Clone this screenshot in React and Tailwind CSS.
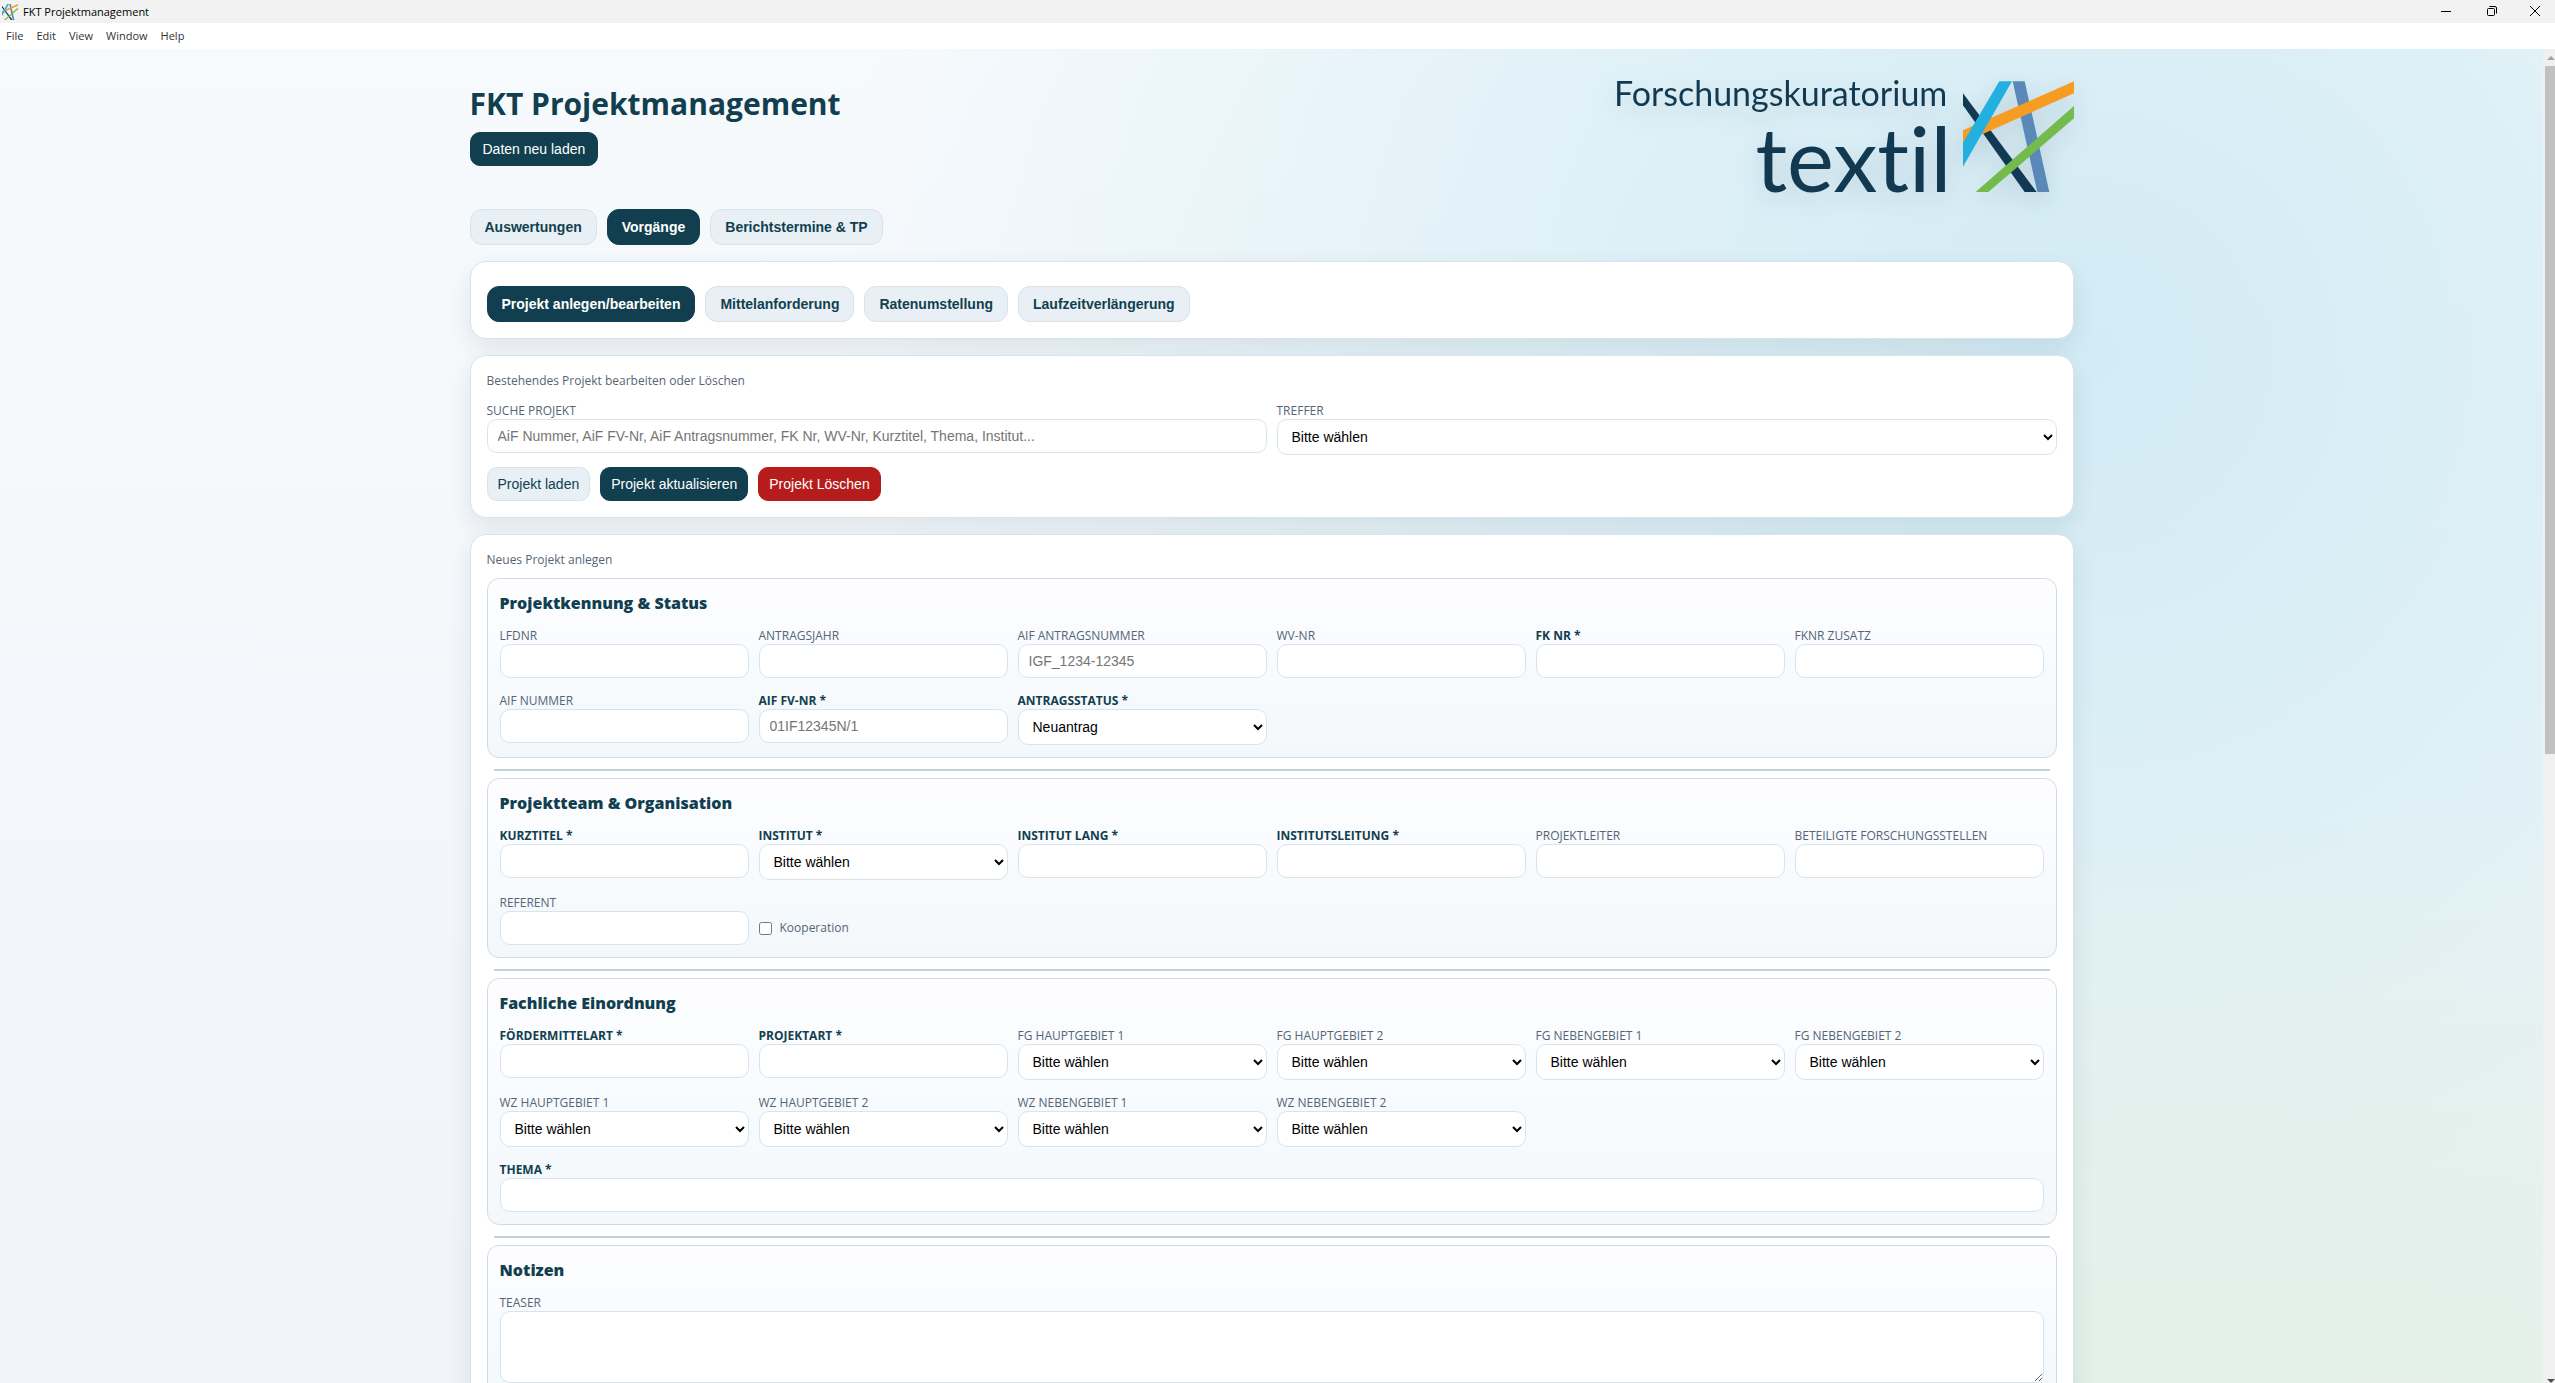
import { useId } from "react";

const NAVY_BTN = "border-[#113f4f] bg-[#113f4f] text-white";
const LIGHT_BTN = "border-[#d8e3ea] bg-[#e8eff5] text-[#113f4f]";
const CONTROL =
  "w-full rounded-[10px] border border-[#d8e4eb] bg-white text-sm leading-4 font-[Liberation_Sans,Arial,sans-serif]";

function Tab({ children, active }) {
  return (
    <button
      type="button"
      className={`h-9 rounded-xl border px-3.5 font-[Liberation_Sans,Arial,sans-serif] text-sm leading-4 font-bold ${active ? NAVY_BTN : LIGHT_BTN}`}
    >
      {children}
    </button>
  );
}

function Action({ children, tone }) {
  return (
    <button
      type="button"
      className={`h-[34px] rounded-[10px] border px-2.5 font-[Liberation_Sans,Arial,sans-serif] text-sm leading-4 ${tone}`}
    >
      {children}
    </button>
  );
}

function Card({ children, className = "" }) {
  return (
    <section
      className={`rounded-2xl border border-[#d8e4eb] bg-white p-4 shadow-[0_10px_24px_rgba(17,40,60,0.09)] ${className}`}
    >
      {children}
    </section>
  );
}

function Field({ label, required, placeholder, select, area, className = "" }) {
  const id = useId();
  return (
    <div className={`flex flex-col ${className}`}>
      <label
        htmlFor={id}
        className={`pt-1 text-xs leading-[17px] uppercase ${required ? "font-bold text-[#113f4f]" : "text-[#566575]"}`}
      >
        {label}
        {required ? " *" : ""}
      </label>
      {select ? (
        <select id={id} className={`${CONTROL} h-9 px-2.5 text-black`}>
          <option>{select}</option>
        </select>
      ) : area ? (
        <textarea id={id} className={`${CONTROL} h-[72px] px-2.5 py-2`} />
      ) : (
        <input
          id={id}
          type="text"
          placeholder={placeholder}
          className={`${CONTROL} h-[34px] px-2.5 placeholder:text-[#757575]`}
        />
      )}
    </div>
  );
}

function Group({ title, children }) {
  return (
    <fieldset className="block">
      <div className="rounded-xl border border-[#cddde6] bg-linear-to-b from-[#fdfdff] via-[#f8fbfe] to-[#f4f8fb] p-3">
        <h2 className="mb-2 text-base leading-6 font-extrabold text-[#113f4f]">{title}</h2>
        <div className="grid grid-cols-6 items-start gap-2.5">{children}</div>
      </div>
    </fieldset>
  );
}

function Divider() {
  return <hr className="mx-[7px] mt-[11px] mb-[7px] h-0.5 border-0 bg-[#c0d2de]" />;
}

function Threads() {
  return (
    <>
      <polygon fill="#5a88b8" points="1268,66 1304,66 1378,398 1342,398" />
      <polygon fill="#113a52" points="1119,102 1119,138 1304,398 1340,398" />
      <polygon fill="#f79c22" points="1119,213 1452,66 1452,102 1119,250" />
      <polygon fill="#22b0e0" points="1228,66 1266,66 1119,322 1119,250" />
      <polygon fill="#74ba4c" points="1157,398 1195,398 1452,177 1452,140" />
    </>
  );
}

function Logo() {
  return (
    <svg
      viewBox="66 65 1386 336"
      className="h-28 w-[462px] overflow-visible drop-shadow-[0_8px_12px_rgba(17,50,75,0.15)]"
      role="img"
      aria-label="Forschungskuratorium textil"
    >
      <g fill="#113a52" textAnchor="end" fontFamily="Lato, sans-serif" className="[font-variant-ligatures:none]">
        <text x="1072" y="139" fontSize="102">Forschungskuratorium</text>
        <text x="1084" y="397" fontSize="266">textil</text>
      </g>
      <Threads />
    </svg>
  );
}

function Chrome() {
  return (
    <header className="shrink-0 font-[Open_Sans,sans-serif] text-black">
      <div className="flex h-[23px] items-center bg-[#f2f2f2]">
        <svg viewBox="1119 65 333 334" className="ml-0.5 size-4" aria-hidden="true">
          <Threads />
        </svg>
        <span className="ml-[5px] text-[11px] leading-4">FKT Projektmanagement</span>
        <div className="ml-auto flex items-center">
          <button type="button" aria-label="Minimieren" className="flex w-[46px] justify-center">
            <svg viewBox="0 0 12 12" className="size-3"><path d="M1 5.500h10" stroke="#000" /></svg>
          </button>
          <button type="button" aria-label="Verkleinern" className="flex w-[46px] justify-center">
            <svg viewBox="0 0 12 12" className="size-3" fill="none" stroke="#000">
              <rect x="1.5" y="2.500" width="7" height="7" rx="1" />
              <path d="M3.5 .5h5.5a1.5 1.5 0 0 1 1.5 1.5v5.500" />
            </svg>
          </button>
          <button type="button" aria-label="Schließen" className="flex w-10 justify-center">
            <svg viewBox="0 0 12 12" className="size-3"><path d="M1 0l10 10M11 0L1 10" stroke="#000" /></svg>
          </button>
        </div>
      </div>
      <nav className="flex h-[26px] items-center gap-[13px] bg-white pl-1.5 text-[11px] leading-4 text-[#333]">
        {["File", "Edit", "View", "Window", "Help"].map((item) => (
          <button key={item} type="button">{item}</button>
        ))}
      </nav>
    </header>
  );
}

function ScrollTrack() {
  return (
    <div className="flex w-3 shrink-0 flex-col items-center bg-[#f0f0f0]" aria-hidden="true">
      <svg viewBox="0 0 12 17" className="h-[17px] w-3"><path d="M8 7l4 4H4z" fill="#a3a3a3" /></svg>
      <div className="ml-0.5 h-[51.6%] w-2.5 bg-[#c1c1c1]" />
      <svg viewBox="0 0 12 5" className="mt-auto h-[5px] w-3"><path d="M4 1h8L8 5z" fill="#505050" /></svg>
    </div>
  );
}

const PLEASE = "Bitte wählen";

export default function App() {
  return (
    <div className="flex h-screen flex-col overflow-hidden font-[Open_Sans,sans-serif]">
      <Chrome />
      <div className="flex min-h-0 flex-1">
        <div className="min-w-0 flex-1 overflow-hidden bg-[radial-gradient(ellipse_64%_50%_at_88%_105%,rgba(226,240,230,0.85),rgba(226,240,230,0.6)_50%,transparent),radial-gradient(circle_at_82%_23%,#d2ebf5_0%,rgba(214,237,245,0.72)_22%,rgba(220,238,246,0)_54%),linear-gradient(180deg,#f7fafd,#f0f4f8)]">
          <main className="mx-auto max-w-[1640px] px-[18px] pt-8">
            <div className="mb-4 flex items-start justify-between">
              <div>
                <h1 className="mb-[5px] text-[30px] leading-[46px] font-bold text-[#113f4f]">FKT Projektmanagement</h1>
                <button
                  type="button"
                  className={`block h-[34px] rounded-[10px] border px-3 font-[Liberation_Sans,Arial,sans-serif] text-sm leading-4 ${NAVY_BTN}`}
                >
                  Daten neu laden
                </button>
              </div>
              <Logo />
            </div>

            <nav className="mb-4 flex gap-2.5">
              <Tab>Auswertungen</Tab>
              <Tab active>Vorgänge</Tab>
              <Tab>Berichtstermine &amp; TP</Tab>
            </nav>

            <Card className="mb-4 pt-6">
              <nav className="flex gap-2.5">
                <Tab active>Projekt anlegen/bearbeiten</Tab>
                <Tab>Mittelanforderung</Tab>
                <Tab>Ratenumstellung</Tab>
                <Tab>Laufzeitverlängerung</Tab>
              </nav>
            </Card>

            <Card className="mb-4">
              <p className="mb-[9px] text-xs leading-[17px] text-[#566575]">Bestehendes Projekt bearbeiten oder Löschen</p>
              <div className="grid grid-cols-2 items-start gap-2.5">
                <Field
                  label="Suche Projekt"
                  placeholder="AiF Nummer, AiF FV-Nr, AiF Antragsnummer, FK Nr, WV-Nr, Kurztitel, Thema, Institut..."
                />
                <Field label="Treffer" select={PLEASE} />
              </div>
              <div className="mt-3 flex gap-2.5">
                <Action tone={LIGHT_BTN}>Projekt laden</Action>
                <Action tone={NAVY_BTN}>Projekt aktualisieren</Action>
                <Action tone="border-[#b71c1c] bg-[#b71c1c] text-white">Projekt Löschen</Action>
              </div>
            </Card>

            <Card>
              <p className="mb-2.5 text-xs leading-[17px] text-[#566575]">Neues Projekt anlegen</p>

              <Group title="Projektkennung &amp; Status">
                <Field label="LfdNr" />
                <Field label="Antragsjahr" />
                <Field label="AiF Antragsnummer" placeholder="IGF_1234-12345" />
                <Field label="WV-Nr" />
                <Field label="FK Nr" required />
                <Field label="FKNr Zusatz" />
                <Field label="AiF Nummer" />
                <Field label="AiF FV-Nr" required placeholder="01IF12345N/1" />
                <Field label="Antragsstatus" required select="Neuantrag" />
              </Group>
              <Divider />

              <Group title="Projektteam &amp; Organisation">
                <Field label="Kurztitel" required />
                <Field label="Institut" required select={PLEASE} />
                <Field label="Institut Lang" required />
                <Field label="Institutsleitung" required />
                <Field label="Projektleiter" />
                <Field label="Beteiligte Forschungsstellen" />
                <Field label="Referent" />
                <label className="flex h-[34px] items-center gap-2 self-end text-xs leading-4 text-[#566575]">
                  <input type="checkbox" className="size-[13px]" />
                  Kooperation
                </label>
              </Group>
              <Divider />

              <Group title="Fachliche Einordnung">
                <Field label="Fördermittelart" required />
                <Field label="Projektart" required />
                <Field label="FG Hauptgebiet 1" select={PLEASE} />
                <Field label="FG Hauptgebiet 2" select={PLEASE} />
                <Field label="FG Nebengebiet 1" select={PLEASE} />
                <Field label="FG Nebengebiet 2" select={PLEASE} />
                <Field label="WZ Hauptgebiet 1" select={PLEASE} />
                <Field label="WZ Hauptgebiet 2" select={PLEASE} />
                <Field label="WZ Nebengebiet 1" select={PLEASE} />
                <Field label="WZ Nebengebiet 2" select={PLEASE} />
                <Field label="Thema" required className="col-span-6" />
              </Group>
              <Divider />

              <Group title="Notizen">
                <Field label="Teaser" area className="col-span-6" />
              </Group>
            </Card>
          </main>
        </div>
        <ScrollTrack />
      </div>
    </div>
  );
}
